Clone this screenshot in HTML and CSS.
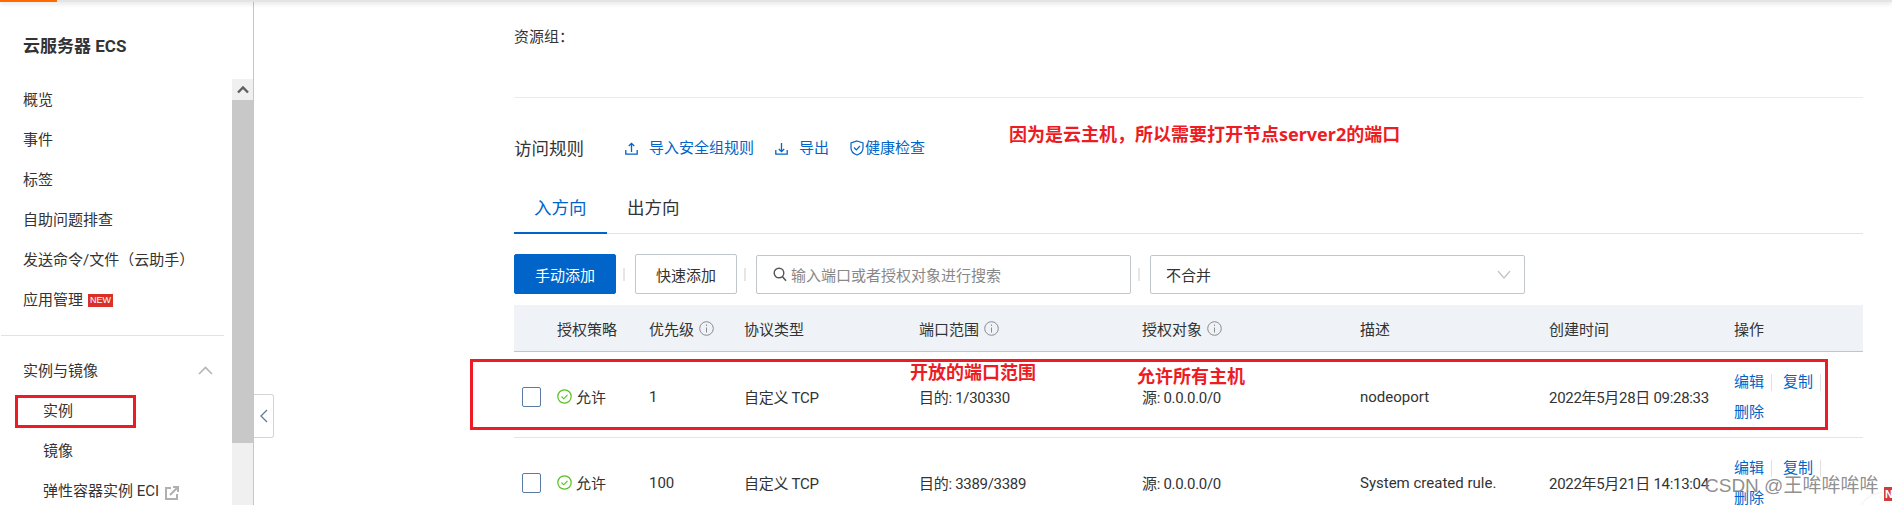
FILE: index.html
```html
<!DOCTYPE html>
<html lang="zh-CN">
<head>
<meta charset="utf-8">
<title>云服务器 ECS</title>
<link rel="stylesheet" href="styles.css">
</head>
<body>
<div class="topbar"><div class="topbar-accent"></div></div>
<div class="page">
  <aside class="sidebar">
    <h1 class="side-title">云服务器 ECS</h1>
    <div class="side-body">
      <nav class="side-nav">
        <a class="nav-item">概览</a>
        <a class="nav-item">事件</a>
        <a class="nav-item">标签</a>
        <a class="nav-item">自助问题排查</a>
        <a class="nav-item">发送命令/文件（云助手）</a>
        <a class="nav-item">应用管理<span class="new-tag">NEW</span></a>
        <div class="nav-divider"></div>
        <a class="nav-item nav-section">实例与镜像
          <svg class="section-chevron" width="15" height="9" viewBox="0 0 15 9"><path d="M1 8l6.500-6.500L14 8" fill="none" stroke="#b5b5b5" stroke-width="1.600"/></svg>
        </a>
        <a class="nav-item nav-sub">实例</a>
        <a class="nav-item nav-sub">镜像</a>
        <a class="nav-item nav-sub">弹性容器实例 ECI
          <svg class="ext-icon" width="14" height="14" viewBox="0 0 14 14"><path d="M6 2H1v11h11V8" fill="none" stroke="#b0b0b0" stroke-width="2"/><path d="M5 9l7-7M8 1h5v5" fill="none" stroke="#b0b0b0" stroke-width="2"/></svg>
        </a>
      </nav>
      <div class="scrollbar">
        <div class="scroll-btn"><svg width="12" height="9" viewBox="0 0 12 9"><path d="M1 7.500l5-5 5 5" fill="none" stroke="#606060" stroke-width="2.400"/></svg></div>
        <div class="scroll-thumb"></div>
        <div class="scroll-track"></div>
      </div>
    </div>
  </aside>

  <main class="main">
    <div class="info-block">资源组：</div>
    <div class="rules-head">
      <h2 class="rules-title">访问规则</h2>
      <a class="link link-import">
        <svg class="link-icon" width="13" height="13" viewBox="0 0 13 13"><path d="M6.500 10V1.500M3.800 4l2.700-2.700L9.200 4M.8 8v4.200h11.400V8" fill="none" stroke="#0064c8" stroke-width="1.300"/></svg>导入安全组规则</a>
      <a class="link link-export">
        <svg class="link-icon" width="13" height="13" viewBox="0 0 13 13"><path d="M6.500 1v8.500M3.800 7l2.700 2.700L9.200 7M.8 8v4.200h11.400V8" fill="none" stroke="#0064c8" stroke-width="1.300"/></svg>导出</a>
      <a class="link link-health">
        <svg class="shield-icon" width="14" height="16" viewBox="0 0 14 16"><path d="M7 1l6 2v5c0 3.500-2.500 5.800-6 7-3.500-1.200-6-3.500-6-7V3z" fill="none" stroke="#0064c8" stroke-width="1.200"/><path d="M4 7.500l2.300 2.300L10 6" fill="none" stroke="#0064c8" stroke-width="1.200"/></svg>健康检查</a>
    </div>
    <div class="tabs">
      <a class="tab tab-active">入方向</a>
      <a class="tab">出方向</a>
    </div>
    <div class="toolbar">
      <button class="btn btn-primary">手动添加</button><span class="tool-sep"></span>
      <button class="btn">快速添加</button><span class="tool-sep"></span>
      <div class="field field-search">
        <svg class="search-icon" width="14" height="15" viewBox="0 0 14 15"><circle cx="6" cy="6" r="4.800" fill="none" stroke="#555" stroke-width="1.400"/><path d="M9.500 9.800l3.500 4" fill="none" stroke="#555" stroke-width="1.500"/></svg>
        <span class="placeholder">输入端口或者授权对象进行搜索</span>
      </div><span class="tool-sep"></span>
      <div class="field field-select">
        <span>不合并</span>
        <svg width="14" height="9" viewBox="0 0 14 9"><path d="M1 1l6 7 6-7" fill="none" stroke="#c0c4c8" stroke-width="1.200"/></svg>
      </div>
    </div>

    <div class="table">
      <div class="row row-head">
        <span></span>
        <span>授权策略</span>
        <span class="head-info">优先级<svg class="info-icon" width="15" height="15" viewBox="0 0 15 15"><circle cx="7.500" cy="7.500" r="6.800" fill="none" stroke="#8c8c8c"/><path d="M7.500 6.500v5M7.500 3.500v1.400" stroke="#8c8c8c" fill="none"/></svg></span>
        <span>协议类型</span>
        <span class="head-info">端口范围<svg class="info-icon" width="15" height="15" viewBox="0 0 15 15"><circle cx="7.500" cy="7.500" r="6.800" fill="none" stroke="#8c8c8c"/><path d="M7.500 6.500v5M7.500 3.500v1.400" stroke="#8c8c8c" fill="none"/></svg></span>
        <span class="head-info">授权对象<svg class="info-icon" width="15" height="15" viewBox="0 0 15 15"><circle cx="7.500" cy="7.500" r="6.800" fill="none" stroke="#8c8c8c"/><path d="M7.500 6.500v5M7.500 3.500v1.400" stroke="#8c8c8c" fill="none"/></svg></span>
        <span>描述</span>
        <span>创建时间</span>
        <span>操作</span>
      </div>

      <div class="row row-data">
        <span class="check-cell"><span class="checkbox"></span></span>
        <span class="policy"><svg width="15" height="15" viewBox="0 0 15 15"><circle cx="7.500" cy="7.500" r="6.700" fill="none" stroke="#52c41a" stroke-width="1.200"/><path d="M4.500 7.500l2.200 2.300 3.800-4" fill="none" stroke="#52c41a" stroke-width="1.100"/></svg>允许</span>
        <span>1</span>
        <span class="tight">自定义 TCP</span>
        <span class="tight">目的: 1/30330</span>
        <span class="tight">源: 0.0.0.0/0</span>
        <span>nodeoport</span>
        <span class="tight">2022年5月28日 09:28:33</span>
        <span class="actions">
          <a class="link action">编辑</a><a class="link action">复制</a><a class="link action">删除</a>
        </span>
      </div>

      <div class="row row-data">
        <span class="check-cell"><span class="checkbox"></span></span>
        <span class="policy"><svg width="15" height="15" viewBox="0 0 15 15"><circle cx="7.500" cy="7.500" r="6.700" fill="none" stroke="#52c41a" stroke-width="1.200"/><path d="M4.500 7.500l2.200 2.300 3.800-4" fill="none" stroke="#52c41a" stroke-width="1.100"/></svg>允许</span>
        <span>100</span>
        <span class="tight">自定义 TCP</span>
        <span class="tight">目的: 3389/3389</span>
        <span class="tight">源: 0.0.0.0/0</span>
        <span>System created rule.</span>
        <span class="tight">2022年5月21日 14:13:04</span>
        <span class="actions">
          <a class="link action">编辑</a><a class="link action">复制</a><a class="link action">删除</a>
        </span>
      </div>
    </div>
  </main>
</div>

<button class="collapse-tab"><svg width="8" height="14" viewBox="0 0 8 14"><path d="M7 1L1 7l6 6" fill="none" stroke="#5b7c9e" stroke-width="1.300"/></svg></button>

<div class="mark mark-side"></div>
<div class="mark mark-row"></div>
<div class="note note-top">因为是云主机，所以需要打开节点server2的端口</div>
<div class="note note-port">开放的端口范围</div>
<div class="note note-host">允许所有主机</div>

<div class="corner-shape"></div>
<div class="corner-badge">N</div>
<div class="watermark">CSDN @王哞哞哞哞</div>
</body>
</html>
```
FILE: styles.css
```css
* { box-sizing: border-box; }
html, body { margin: 0; height: 100%; }
body {
  width: 1892px;
  height: 505px;
  overflow: hidden;
  position: relative;
  background: #fff;
  color: #333;
  font-family: Roboto, "Noto Sans CJK SC", sans-serif;
  font-size: 15px;
  display: flex;
  flex-direction: column;
}
a { color: inherit; text-decoration: none; }
h1, h2 { margin: 0; }

.topbar {
  height: 2px;
  flex: none;
  background: #e4e4e4;
  box-shadow: 0 1px 5px rgba(0, 0, 0, .22);
  position: relative;
  z-index: 2;
}
.topbar-accent { width: 57px; height: 2px; background: #ff6a00; }

.page { flex: 1; display: flex; min-height: 0; overflow: hidden; }

/* sidebar */
.sidebar {
  width: 254px;
  flex: none;
  border-right: 1px solid #c6c6c6;
  display: flex;
  flex-direction: column;
}
.side-title {
  height: 77px;
  flex: none;
  padding: 33px 0 0 23px;
  font-size: 17px;
  line-height: 22px;
  font-weight: 700;
  color: #333;
}
.side-body { flex: 1; display: flex; min-height: 0; }
.side-nav { width: 232px; flex: none; padding-top: 1px; }
.nav-item {
  height: 40px;
  padding-left: 23px;
  display: flex;
  align-items: center;
  line-height: 20px;
  color: #333;
}
.new-tag {
  margin-left: 5px;
  width: 25px;
  height: 13px;
  background: #d9302a;
  color: #fff;
  font: 9px/13px "Liberation Sans", sans-serif;
  text-align: center;
}
.nav-divider {
  height: 1px;
  margin: 15px 8px 15px 1px;
  background: #e3e3e3;
}
.nav-section { position: relative; }
.section-chevron { position: absolute; left: 198px; top: 15px; }
.nav-sub { padding-left: 43px; }
.ext-icon { margin-left: 6px; margin-top: 4px; }

.scrollbar { width: 21px; flex: none; display: flex; flex-direction: column; }
.scroll-btn {
  height: 21px;
  background: #f0f0f0;
  display: flex;
  align-items: center;
  justify-content: center;
}
.scroll-thumb { height: 343px; background: #c8c8c8; }
.scroll-track { flex: 1; background: #f0f0f0; }

/* main */
.main { flex: 1; padding: 0 29px 0 260px; min-width: 0; }
.info-block {
  height: 96px;
  padding-top: 25px;
  line-height: 20px;
  border-bottom: 1px solid #ebebeb;
}
.rules-head {
  height: 98px;
  padding-top: 38px;
  display: flex;
  align-items: flex-start;
}
.rules-title { font-size: 17.5px; font-weight: 400; line-height: 26px; width: 111px; }
.link { color: #0064c8; }
.rules-head .link { display: flex; align-items: center; line-height: 24px; height: 24px; }
.link-icon { margin-right: 11px; }
.link-import { margin-right: 21px; }
.link-export { margin-right: 21px; }
.shield-icon { margin-right: 1px; }

.tabs {
  display: flex;
  height: 38px;
  border-bottom: 1px solid #e3e3e3;
}
.tab {
  width: 93px;
  height: 38px;
  font-size: 17.5px;
  line-height: 24px;
  padding-left: 20px;
}
.tab-active { color: #0064c8; border-bottom: 2px solid #0064c8; }

.toolbar { display: flex; align-items: center; height: 40px; margin-top: 20px; }
.btn {
  width: 102px;
  height: 40px;
  padding: 0;
  background: #fff;
  border: 1px solid #c0c6cc;
  border-radius: 2px;
  color: #333;
  font: inherit;
}
.btn-primary { background: #0064c8; border-color: #0064c8; color: #fff; }
.tool-sep {
  width: 2px;
  height: 13px;
  margin: 0 10px 0 7px;
  background: #e6e6e6;
}
.field {
  height: 39px;
  margin-top: 1px;
  border: 1px solid #c0c6cc;
  border-radius: 2px;
  display: flex;
  align-items: center;
}
.field-search { width: 375px; padding-left: 16px; }
.search-icon { margin-right: 4px; }
.placeholder { color: #888; }
.field-select {
  width: 375px;
  padding: 0 13px 0 15px;
  justify-content: space-between;
}

/* table */
.table { margin-top: 11px; }
.row {
  display: grid;
  grid-template-columns: 43px 92px 95px 175px 223px 218px 189px 185px 129px;
  align-items: center;
}
.row-head {
  height: 47px;
  background: #eff2f7;
  border-bottom: 1px solid #c0c6cc;
}
.head-info { display: flex; align-items: center; }
.info-icon { margin-left: 5px; }
.row-data {
  height: 86px;
  padding-top: 4px;
  border-bottom: 1px solid #e5e5e5;
}
.tight { letter-spacing: -.3px; white-space: nowrap; }
.check-cell { padding-left: 8px; }
.checkbox {
  display: block;
  width: 19px;
  height: 20px;
  border: 1px solid #5a7ba6;
  border-radius: 2px;
}
.policy { display: flex; align-items: center; gap: 4px; }
.actions { display: flex; flex-wrap: wrap; width: 100px; }
.action { width: 49px; height: 30px; line-height: 30px; position: relative; }
.action:nth-child(3) { width: 100%; }
.action:nth-child(-n+2)::after {
  content: "";
  position: absolute;
  left: 37px;
  top: 7px;
  width: 1px;
  height: 17px;
  background: #e0e0e0;
}

/* overlays */
.collapse-tab {
  position: absolute;
  left: 254px;
  top: 394px;
  width: 20px;
  height: 44px;
  padding: 0;
  background: #fff;
  border: 1px solid #d4d4d4;
  border-left: 0;
  border-radius: 0 3px 3px 0;
  display: flex;
  align-items: center;
  justify-content: center;
}
.mark { position: absolute; border: 3px solid #ed1c24; }
.mark-side { left: 15px; top: 395px; width: 121px; height: 33px; }
.mark-row { left: 470px; top: 359px; width: 1358px; height: 71px; }
.note {
  position: absolute;
  color: #ed1c24;
  font-size: 18px;
  font-weight: 700;
  line-height: 24px;
  white-space: nowrap;
  font-family: "Noto Sans", "Noto Sans CJK SC", sans-serif;
}
.note-top { left: 1009px; top: 122px; }
.note-port { left: 910px; top: 360px; }
.note-host { left: 1137px; top: 364px; }
.corner-shape {
  position: absolute;
  left: 1858px;
  top: 493px;
  width: 60px;
  height: 40px;
  background: #fff;
  border-radius: 26px 0 0 0;
  box-shadow: 0 0 3px rgba(0, 0, 0, .12);
}
.corner-badge {
  position: absolute;
  left: 1884px;
  top: 487px;
  width: 12px;
  height: 14px;
  padding-left: 1px;
  background: #d33b3b;
  color: #fff;
  font: 700 11px/14px "Liberation Sans", sans-serif;
}
.watermark {
  position: absolute;
  left: 1705px;
  top: 473px;
  color: rgba(70, 70, 70, .62);
  font-family: "Liberation Sans", "Noto Sans CJK SC", sans-serif;
  font-size: 19px;
  line-height: 26px;
  white-space: nowrap;
  text-shadow: 0 0 1px rgba(255, 255, 255, .8);
}
```
